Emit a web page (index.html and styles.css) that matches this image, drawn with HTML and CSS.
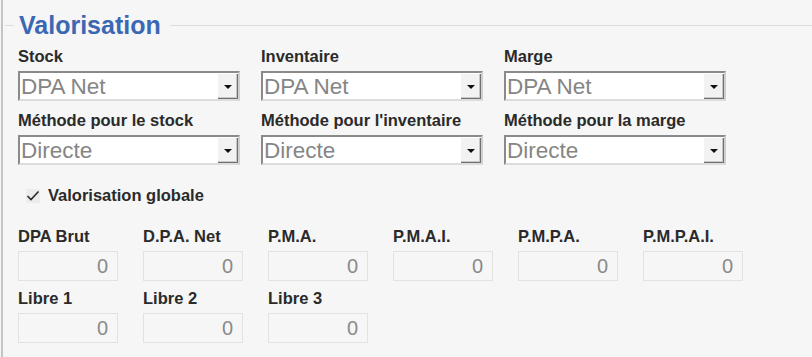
FILE: index.html
```html
<!DOCTYPE html>
<html lang="fr">
<head>
<meta charset="utf-8">
<link rel="stylesheet" href="styles.css">
</head>
<body>
<div class="page">
  <fieldset class="box">
    <legend class="legend">Valorisation</legend>
    <div class="grid3">
      <div class="field">
        <div class="lbl">Stock</div>
        <div class="select"><span class="val">DPA Net</span><span class="btn"><span class="arrow"></span></span></div>
      </div>
      <div class="field">
        <div class="lbl">Inventaire</div>
        <div class="select"><span class="val">DPA Net</span><span class="btn"><span class="arrow"></span></span></div>
      </div>
      <div class="field">
        <div class="lbl">Marge</div>
        <div class="select"><span class="val">DPA Net</span><span class="btn"><span class="arrow"></span></span></div>
      </div>
      <div class="field">
        <div class="lbl">Méthode pour le stock</div>
        <div class="select"><span class="val">Directe</span><span class="btn"><span class="arrow"></span></span></div>
      </div>
      <div class="field">
        <div class="lbl">Méthode pour l'inventaire</div>
        <div class="select"><span class="val">Directe</span><span class="btn"><span class="arrow"></span></span></div>
      </div>
      <div class="field">
        <div class="lbl">Méthode pour la marge</div>
        <div class="select"><span class="val">Directe</span><span class="btn"><span class="arrow"></span></span></div>
      </div>
    </div>
    <div class="check">
      <span class="cb"><svg width="14" height="14" viewBox="0 0 14 14"><path d="M1.5 7 L5 10.5 L12.5 2.5" fill="none" stroke="#2a2a2a" stroke-width="1.6"/></svg></span>
      <span class="cblbl">Valorisation globale</span>
    </div>
    <div class="grid6">
      <div class="nfield"><div class="lbl">DPA Brut</div><div class="num">0</div></div>
      <div class="nfield"><div class="lbl">D.P.A. Net</div><div class="num">0</div></div>
      <div class="nfield"><div class="lbl">P.M.A.</div><div class="num">0</div></div>
      <div class="nfield"><div class="lbl">P.M.A.I.</div><div class="num">0</div></div>
      <div class="nfield"><div class="lbl">P.M.P.A.</div><div class="num">0</div></div>
      <div class="nfield"><div class="lbl">P.M.P.A.I.</div><div class="num">0</div></div>
      <div class="nfield"><div class="lbl">Libre 1</div><div class="num">0</div></div>
      <div class="nfield"><div class="lbl">Libre 2</div><div class="num">0</div></div>
      <div class="nfield"><div class="lbl">Libre 3</div><div class="num">0</div></div>
    </div>
  </fieldset>
</div>
</body>
</html>
```
FILE: styles.css
```css
html, body {
  margin: 0;
  padding: 0;
  background: #f6f6f6;
}
.page {
  width: 811px;
  height: 357px;
  box-sizing: border-box;
  border-left: 2px solid #c4c4c4;
  margin-left: 1px;
  padding-top: 12px;
  font-family: "Liberation Sans", Arial, sans-serif;
  overflow: hidden;
}
.box {
  margin: 0 0 0 2px;
  padding: 0 0 0 13px;
  border: none;
  border-top: 1px solid #dcdcdc;
}
.legend {
  margin-left: -4px;
  padding: 0 9px 0 5px;
  font-size: 25px;
  font-weight: bold;
  color: #3b68b3;
  line-height: 26px;
}
.grid3 {
  display: grid;
  grid-template-columns: 243px 243px 243px;
  row-gap: 10px;
  margin-top: 9px;
}
.lbl {
  font-size: 16.5px;
  font-weight: bold;
  color: #2a2a2a;
  line-height: 19px;
  white-space: nowrap;
}
.field .lbl {
  margin-bottom: 5px;
}
.select {
  width: 222px;
  height: 30px;
  box-sizing: border-box;
  background: #fff;
  border: 2px solid #8a8a8a;
  border-right-color: #cfcfcf;
  border-bottom-color: #dcdcdc;
  display: flex;
  align-items: stretch;
}
.val {
  flex: 1;
  font-size: 22.5px;
  color: #858585;
  line-height: 28px;
  height: 26px;
  overflow: hidden;
  padding-left: 1px;
  white-space: nowrap;
}
.btn {
  width: 20px;
  background: #f2f2f2;
  border-left: 1px solid #fff;
  border-top: 1px solid #fff;
  box-shadow: inset -1px -1px 0 #707070, inset -2px -2px 0 #c8c8c8;
  display: flex;
  align-items: center;
  justify-content: center;
}
.arrow {
  width: 0;
  height: 0;
  border-left: 4px solid transparent;
  border-right: 4px solid transparent;
  border-top: 4px solid #111;
  margin-top: 1px;
}
.check {
  display: flex;
  align-items: center;
  margin: 21px 0 0 8px;
  height: 19px;
}
.cb {
  width: 14px;
  height: 14px;
  background: #ececec;
  display: inline-flex;
}
.cblbl {
  margin-left: 8px;
  font-size: 16.5px;
  font-weight: bold;
  color: #2a2a2a;
  line-height: 19px;
}
.grid6 {
  display: grid;
  grid-template-columns: repeat(6, 125px);
  row-gap: 8px;
  margin-top: 22px;
}
.nfield .lbl {
  margin-bottom: 5px;
}
.num {
  width: 100px;
  height: 30px;
  box-sizing: border-box;
  border: 1px solid #e2e2e2;
  background: #f6f6f6;
  font-size: 20px;
  color: #8a8a8a;
  text-align: right;
  line-height: 28px;
  padding-right: 9px;
}
```
